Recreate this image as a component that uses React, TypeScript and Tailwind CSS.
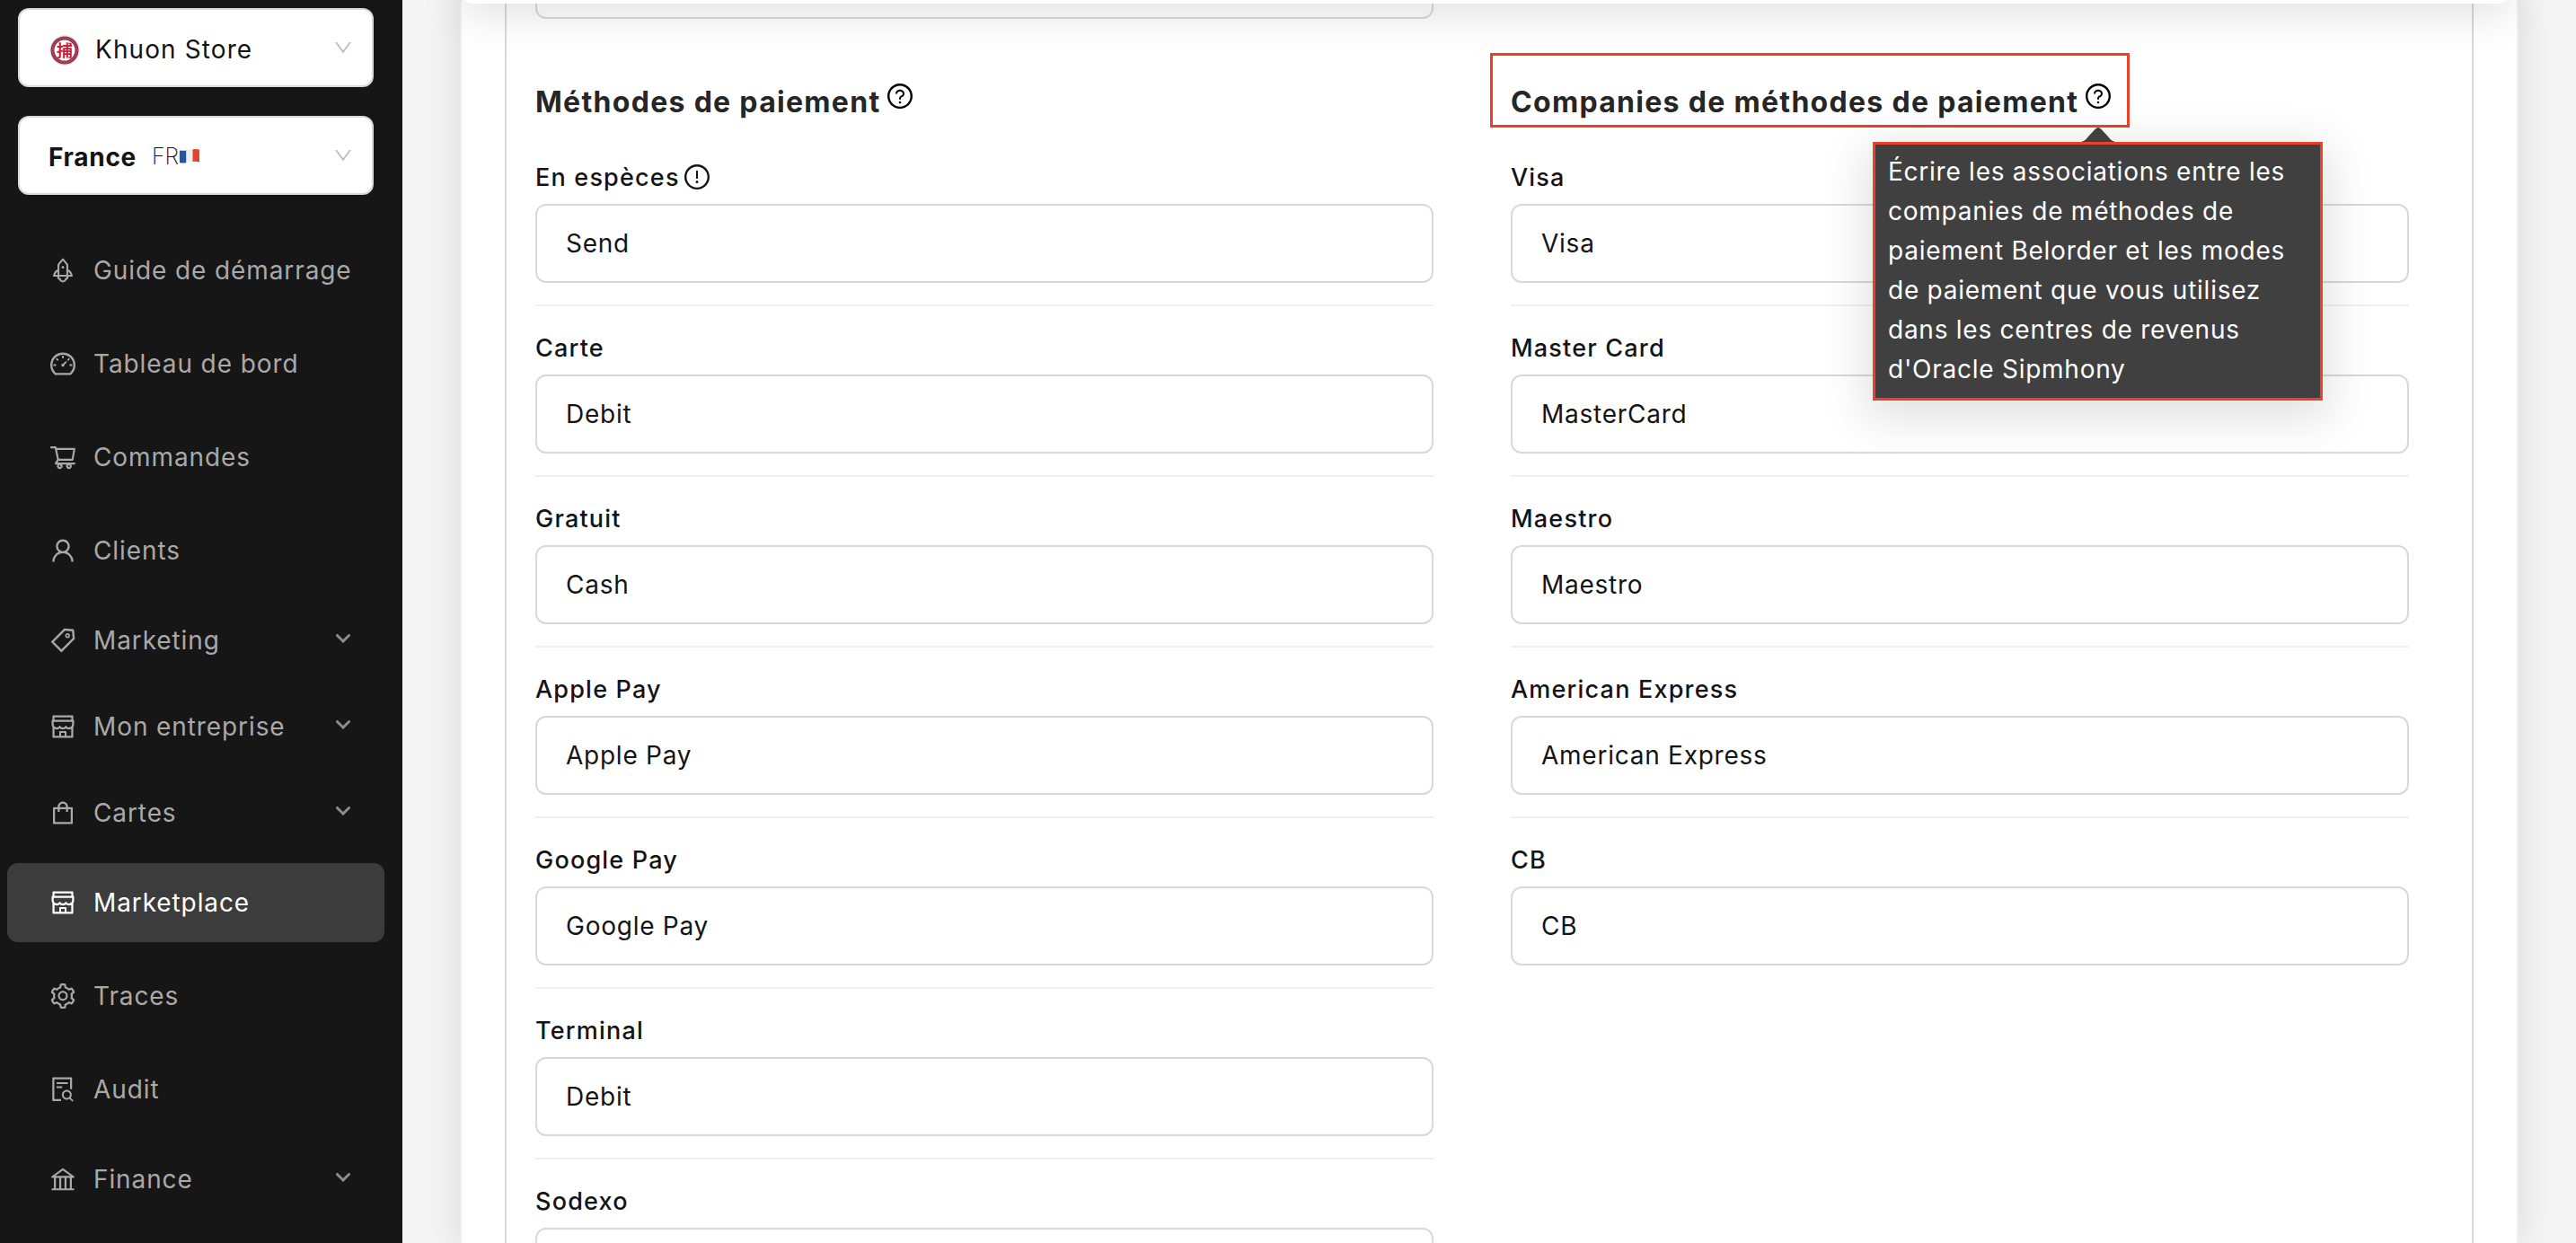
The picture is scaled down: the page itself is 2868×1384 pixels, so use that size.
import React from "react";
import {
  AiOutlineRocket,
  AiOutlineDashboard,
  AiOutlineShoppingCart,
  AiOutlineUser,
  AiOutlineTag,
  AiOutlineShop,
  AiOutlineShopping,
  AiOutlineSetting,
  AiOutlineFileSearch,
  AiOutlineBank,
  AiOutlineDown,
  AiOutlineQuestionCircle,
  AiOutlineExclamationCircle,
} from "react-icons/ai";

const menu = [
  { label: "Guide de démarrage", icon: AiOutlineRocket, height: "h-[104px]" },
  { label: "Tableau de bord", icon: AiOutlineDashboard, height: "h-[104px]" },
  { label: "Commandes", icon: AiOutlineShoppingCart, height: "h-[104px]" },
  { label: "Clients", icon: AiOutlineUser, height: "h-[104px]" },
  { label: "Marketing", icon: AiOutlineTag, sub: true, height: "h-24" },
  { label: "Mon entreprise", icon: AiOutlineShop, sub: true, height: "h-24" },
  { label: "Cartes", icon: AiOutlineShopping, sub: true, height: "h-24" },
  { label: "Marketplace", icon: AiOutlineShop, active: true, height: "h-[104px]" },
  { label: "Traces", icon: AiOutlineSetting, height: "h-[104px]" },
  { label: "Audit", icon: AiOutlineFileSearch, height: "h-[104px]" },
  { label: "Finance", icon: AiOutlineBank, sub: true, height: "h-24" },
];

const methods = [
  { label: "En espèces", value: "Send", info: true },
  { label: "Carte", value: "Debit" },
  { label: "Gratuit", value: "Cash" },
  { label: "Apple Pay", value: "Apple Pay" },
  { label: "Google Pay", value: "Google Pay" },
  { label: "Terminal", value: "Debit" },
  { label: "Sodexo", value: "" },
];

const companies = [
  { label: "Visa", value: "Visa" },
  { label: "Master Card", value: "MasterCard" },
  { label: "Maestro", value: "Maestro" },
  { label: "American Express", value: "American Express" },
  { label: "CB", value: "CB" },
];

const StoreLogo = () => (
  <svg viewBox="0 0 34 34" className="mt-0.5 ml-px w-[34px] h-[34px]">
    <circle cx="17" cy="17" r="17" fill="#ebebeb" />
    <circle cx="17" cy="17" r="13.5" fill="#fff" stroke="#94324a" strokeWidth="4" />
    <circle cx="17" cy="17" r="13.5" fill="none" stroke="#bd7d8f" strokeWidth="1" strokeDasharray="1.5 1.5" />
    <text
      x="17"
      y="23.5"
      textAnchor="middle"
      fontSize="18"
      fontWeight="700"
      fill="#cc1f3f"
      fontFamily="Noto Sans CJK TC, sans-serif"
    >
      捕
    </text>
  </svg>
);

const Flag = () => (
  <svg viewBox="0 0 22 18" className="mb-0.5 w-[22px] h-[18px]">
    <path d="M0 2.5Q4 3.2 7.5 2.4V16Q4 17 0 16Z" fill="#27539b" />
    <path d="M7.5 2.4Q11 1.4 14.5 1.3V15Q11 15.2 7.5 16Z" fill="#eeeeee" />
    <path d="M14.5 1.3Q18 .8 22 1.5V15.4Q18 14.6 14.5 15Z" fill="#e2432f" />
  </svg>
);

const Select = ({ children }: any) => (
  <div className="flex h-[88px] w-[396px] items-center justify-between rounded-xl border-2 border-[#d9d9d9] bg-white pr-5 pl-8 text-[#141414]">
    <div className="flex items-center pt-1">{children}</div>
    <AiOutlineDown className="size-6 text-[#bfbfbf]" />
  </div>
);

const MenuItem = ({ item }: any) => {
  const Icon = item.icon;
  return (
    <div className={`flex items-center ${item.height}`}>
      <div
        className={`flex h-[88px] w-[420px] items-center rounded-xl pr-[38px] pl-[46px] ${
          item.active ? "bg-[#3c3c3c] text-white" : "text-[#a9a9a9]"
        }`}
      >
        <Icon className="size-8 shrink-0" />
        <span className="ml-[18px] w-0 grow text-[28px] tracking-[0.9px] whitespace-nowrap">{item.label}</span>
        {item.sub && (
          <svg viewBox="0 0 16 10" className="mb-1 h-2.5 w-4" fill="none" stroke="#8c8c8c" strokeWidth="3">
            <path d="M1.5 1.5L8 8L14.5 1.5" strokeLinecap="round" />
          </svg>
        )}
      </div>
    </div>
  );
};

const Title = ({ children }: any) => (
  <h2 className="flex h-[146px] shrink-0 items-center gap-1.5 pt-10 text-[32px] font-bold tracking-[1.3px] text-[#262626]">
    {children}
    <AiOutlineQuestionCircle className="mb-3.5 size-8 text-black" />
  </h2>
);

const Field = ({ item, last }: any) => (
  <div className="flex h-[190px] shrink-0 flex-col">
    <div className="flex h-[60px] items-center gap-[3px] pt-0.5 text-[27px] font-medium tracking-[1.2px] text-[#141414]">
      {item.label}
      {item.info && <AiOutlineExclamationCircle className="mb-[3px] size-8" />}
    </div>
    <div className="flex h-[88px] items-center rounded-xl border-2 border-[#d9d9d9] pl-8 text-[28px] tracking-[0.75px] text-[#141414]">
      {item.value}
    </div>
    {!last && <div className="mt-6 h-0.5 bg-[#f0f0f0]" />}
  </div>
);

const Tooltip = () => (
  <div className="absolute top-[140px] left-[2085px]">
    <svg viewBox="0 0 38 18" className="ml-[232px] h-[18px] w-[38px]">
      <path d="M0 18C4 17 6 15 8 12L16 3.5Q19 .5 22 3.5L30 12C32 15 34 17 38 18Z" fill="#404040" />
    </svg>
    <div className="h-[288px] w-[501px] border-[3px] border-[#ec4128] bg-[#404040] pt-2 pl-3.5 text-[28px] leading-[44px] tracking-[0.75px] whitespace-nowrap text-white shadow-[0_12px_48px_8px_rgba(0,0,0,0.12)]">
      Écrire les associations entre les
      <br />
      companies de méthodes de
      <br />
      paiement Belorder et les modes
      <br />
      de paiement que vous utilisez
      <br />
      dans les centres de revenus
      <br />
      d'Oracle Sipmhony
    </div>
  </div>
);

const App = () => {
  return (
    <div className="relative flex h-[1384px] w-[2868px] overflow-hidden bg-[#f5f5f5] font-['Inter',sans-serif]">
      <aside className="z-10 flex w-[448px] shrink-0 flex-col bg-[#161616]">
        <div className="flex flex-col gap-8 pt-[9px] pl-5 text-[28px]">
          <Select>
            <StoreLogo />
            <span className="ml-[17px] tracking-[1.1px]">Khuon Store</span>
          </Select>
          <Select>
            <span className="font-bold tracking-[0.7px]">France</span>
            <span className="mr-px ml-[17px] text-[25px] font-extralight">FR</span>
            <Flag />
          </Select>
        </div>
        <nav className="mt-8 flex flex-col pl-2">
          {menu.map((item) => (
            <MenuItem key={item.label} item={item} />
          ))}
        </nav>
      </aside>

      <main className="ml-16 flex w-[2292px] shrink-0 justify-center border-x-2 border-[#f0f0f0] bg-white shadow-[0_0_40px_4px_rgba(0,0,20,0.1)]">
        <div className="flex w-[2192px] gap-[86px] border-x-2 border-[#d9d9d9] pl-8">
          <section className="flex w-[1000px] flex-col">
            <div className="h-[21px] shrink-0 rounded-b-xl border-2 border-t-0 border-[#d9d9d9]" />
            <Title>Méthodes de paiement</Title>
            {methods.map((item) => (
              <Field key={item.label} item={item} />
            ))}
          </section>
          <section className="flex w-[1000px] flex-col pt-[21px]">
            <Title>Companies de méthodes de paiement</Title>
            {companies.map((item, i) => (
              <Field key={item.label} item={item} last={i === companies.length - 1} />
            ))}
          </section>
        </div>
      </main>

      {/* bottom edge of the sticky header */}
      <div className="absolute -top-20 left-[514px] h-[84px] w-[2280px] rounded-b-xl bg-white shadow-[0_12px_48px_rgba(0,0,0,0.12)]" />

      <div className="absolute top-[59px] left-[1659px] h-[83px] w-[712px] border-[3px] border-[#ec4128]" />
      <Tooltip />
    </div>
  );
};

export default App;
